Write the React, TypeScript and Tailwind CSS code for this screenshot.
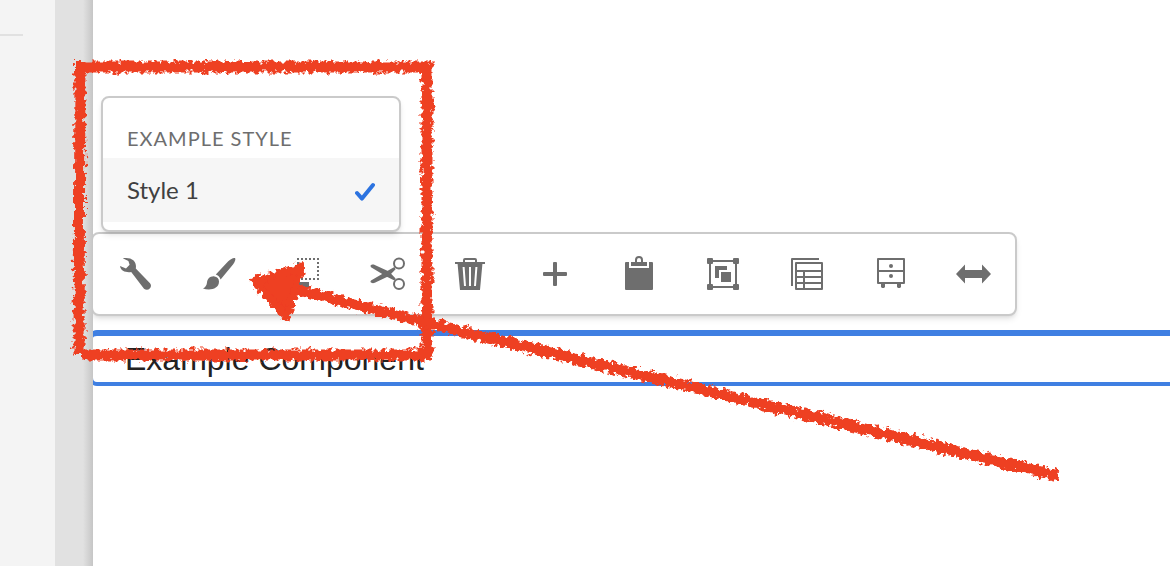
import type { ReactNode } from 'react';

type ToolbarAction = {
  label: string;
  icon: ReactNode;
};

const ACTIONS: ToolbarAction[] = [
  {
    label: 'Configure',
    icon: (
      <path d="M5.7 2.2C9.5 1.6 14 1.8 16.6 4.6C19 7.2 19.2 10 18.8 12.6L33 27.2C36.2 31.3 31 36 27 32.8L14.2 16C9.4 16.8 3.6 15.2 3 10L9 12.6L12.6 8.8L11.4 4.9Z" />
    ),
  },
  {
    label: 'Styles',
    icon: (
      <>
        <path d="M34 2C32 1.5 30 3 27 5.5L14.8 18.6C17 19.5 18.8 21 19.6 23.4L32 8.5C34 5.6 35 3.2 34 2Z" />
        <path d="M13.4 20.4C9 20 6.4 23 6 26.5C5.7 29.5 4.5 31.2 2 32.4C8 34.6 18 33.5 18 25.5C18 22.5 16 20.6 13.4 20.4Z" />
      </>
    ),
  },
  {
    label: 'Copy',
    icon: (
      <>
        <path
          d="M12 3H34M33 2V24M34 23H12M13 24V2"
          fill="none"
          stroke="currentColor"
          strokeWidth="2"
          strokeDasharray="2 2"
        />
        <path d="M10 26H24V32H10Z" />
      </>
    ),
  },
  {
    label: 'Cut',
    icon: (
      <>
        <g fill="none" stroke="currentColor" strokeWidth="2">
          <circle cx="30" cy="7.5" r="5" />
          <circle cx="30" cy="28" r="5" />
        </g>
        <path d="M1.4 9.8C2.4 8.4 4.2 8.2 5.8 9L20 15.6L26.6 22.4L25.4 24.6L17.4 20.4L2 11.2Z" />
        <path d="M1.4 25.8C2.4 27.4 4.2 27.6 5.8 26.8L20 20L26.6 13.2L25.4 11L17.4 15.4L2 24.6Z" />
      </>
    ),
  },
  {
    label: 'Delete',
    icon: (
      <>
        <path
          d="M11 6V4Q11 3 12 3H22Q23 3 23 4V6"
          fill="none"
          stroke="currentColor"
          strokeWidth="2"
        />
        <path d="M2 6H32V8H29.4L27 34H7L4.6 8H2Z" />
        <path
          d="M10.6 11L12 30M17 11V30M23.4 11L22 30"
          fill="none"
          stroke="white"
          strokeWidth="2"
        />
      </>
    ),
  },
  {
    label: 'Insert component',
    icon: (
      <path d="M17 6H19Q20 6 20 7V16H29Q30 16 30 17V19Q30 20 29 20H20V29Q20 30 19 30H17Q16 30 16 29V20H7Q6 20 6 19V17Q6 16 7 16H16V7Q16 6 17 6Z" />
    ),
  },
  {
    label: 'Paste',
    icon: (
      <>
        <path d="M5 6H8V12H28V6H31Q32 6 32 7V33Q32 34 31 34H5Q4 34 4 33V7Q4 6 5 6Z" />
        <path d="M10 6H14V4A4 4 0 0 1 22 4V6H26V10H10ZM16 6H20V4A2 2 0 0 0 16 4Z" />
      </>
    ),
  },
  {
    label: 'Group',
    icon: (
      <>
        <path d="M5 5H31V31H5Z" fill="none" stroke="currentColor" strokeWidth="2" />
        <rect x="2" y="2" width="6" height="6" rx="1" />
        <rect x="28" y="2" width="6" height="6" rx="1" />
        <rect x="2" y="28" width="6" height="6" rx="1" />
        <rect x="28" y="28" width="6" height="6" rx="1" />
        <path d="M10 10H22V14H14V22H10Z" />
        <path d="M16 16H26V26H16Z" />
      </>
    ),
  },
  {
    label: 'Layers',
    icon: (
      <path
        d="M3 30V3H30M7 7H33V33H7ZM7 15H33M7 21H33M7 27H33M15 15V33"
        fill="none"
        stroke="currentColor"
        strokeWidth="2"
        strokeLinejoin="round"
      />
    ),
  },
  {
    label: 'Convert',
    icon: (
      <>
        <path
          d="M5 3H31V27H5ZM5 15H31"
          fill="none"
          stroke="currentColor"
          strokeWidth="2"
          strokeLinejoin="round"
        />
        <circle cx="18" cy="10" r="2" />
        <circle cx="18" cy="20" r="2" />
        <path d="M8 27H12V31L11 32H9L8 31ZM24 27H28V31L27 32H25L24 31Z" />
      </>
    ),
  },
  {
    label: 'Layout',
    icon: <path d="M0 18L9 8.6V14H26V8.6L35 18L26 27.4V22H9V27.4Z" />,
  },
];

function StyleMenu() {
  return (
    <div
      role="menu"
      className="absolute bottom-full left-2 mb-[2px] w-[300px] rounded-lg border-2 border-[#cacaca] bg-white pb-2 shadow-md"
    >
      <h2 className="px-6 pt-[30px] pb-[10px] text-xl leading-5 tracking-wider text-[#6e6e6e] uppercase">
        Example Style
      </h2>
      <button
        type="button"
        role="menuitemcheckbox"
        aria-checked="true"
        className="flex h-16 w-full items-center justify-between bg-[#f6f6f6] px-6 text-2xl text-[#404040]"
      >
        Style 1
        <svg viewBox="0 0 20 20" className="mt-1 h-5 w-5" aria-hidden="true">
          <path
            d="M2 11L7 16.6L18 3"
            fill="none"
            stroke="#2c73e0"
            strokeWidth="4"
            strokeLinecap="round"
            strokeLinejoin="round"
          />
        </svg>
      </button>
    </div>
  );
}

function EditToolbar() {
  return (
    <div className="relative -ml-[2px] w-fit rounded-lg border-2 border-[#cacaca] bg-white shadow-md">
      <div role="toolbar" aria-label="Component actions" className="flex h-20">
        {ACTIONS.map((action) => (
          <button
            key={action.label}
            type="button"
            aria-label={action.label}
            className="flex w-[84px] items-center justify-center text-[#6e6e6e] last:w-[82px]"
          >
            <svg viewBox="0 0 36 36" className="h-9 w-9" fill="currentColor">
              {action.icon}
            </svg>
          </button>
        ))}
      </div>
      <StyleMenu />
    </div>
  );
}

// Hand-drawn callout laid over the editor
function Callout() {
  return (
    <svg
      width="1170"
      height="566"
      className="pointer-events-none absolute top-0 left-0"
      aria-hidden="true"
    >
      <defs>
        <filter
          id="chalk"
          filterUnits="userSpaceOnUse"
          x="0"
          y="0"
          width="1170"
          height="566"
        >
          <feTurbulence
            type="fractalNoise"
            baseFrequency="0.22"
            numOctaves="3"
            seed="4"
            result="noise"
          />
          <feDisplacementMap
            in="SourceGraphic"
            in2="noise"
            scale="10"
            xChannelSelector="R"
            yChannelSelector="G"
          />
        </filter>
      </defs>
      <g
        filter="url(#chalk)"
        fill="none"
        stroke="#ee3f24"
        strokeWidth="11"
        strokeLinejoin="round"
      >
        <path d="M74 67H432M80 61L79 354M427 62V360M82 355H431" />
        <path d="M1058 476L427 323L295 289" />
        <path d="M254 281L301 267L287 317Z" fill="#ee3f24" strokeWidth="8" />
      </g>
    </svg>
  );
}

export default function App() {
  return (
    <div className="relative flex min-h-screen overflow-hidden bg-white font-['Lato',sans-serif]">
      <aside className="w-[55px] shrink-0 bg-[#f4f4f4] pt-[34px]">
        <hr className="w-[23px] border-t-2 border-[#e1e1e1]" />
      </aside>
      <div className="flex w-[38px] shrink-0 justify-end bg-[#e1e1e1]">
        <div className="w-[10px] bg-linear-to-r from-[#e1e1e1] to-[#c6c6c6]" />
      </div>
      <main className="min-w-0 flex-1 overflow-hidden pt-[232px]">
        <EditToolbar />
        <section className="mt-[14px] -mr-2 -ml-1 flex h-14 items-center rounded-lg border-4 border-t-6 border-[#3f7fe2] pl-8">
          <p className="font-['Liberation_Sans',sans-serif] text-[32px] text-[#222222]">
            Example Component
          </p>
        </section>
      </main>
      <Callout />
    </div>
  );
}
